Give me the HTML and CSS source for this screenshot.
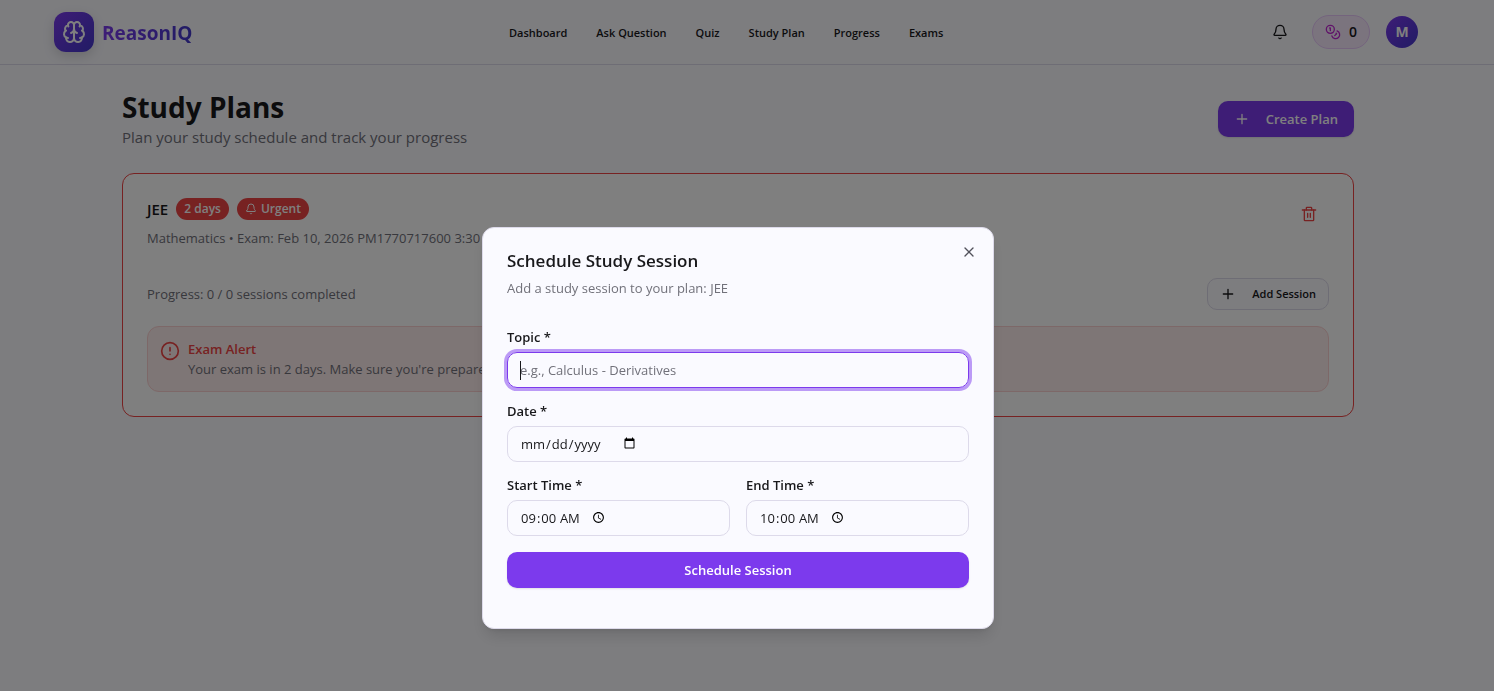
FILE: index.html
```html
<!DOCTYPE html>
<html lang="en">
<head>
<meta charset="utf-8">
<title>Study Plans - ReasonIQ</title>
<link rel="stylesheet" href="styles.css">
</head>
<body>
<header class="site-header">
  <div class="header-inner">
    <a class="brand" href="#">
      <span class="brand-mark">
        <svg class="icon icon-lg" viewBox="0 0 24 24"><path d="M12 5a3 3 0 1 0-5.997.125 4 4 0 0 0-2.526 5.77 4 4 0 0 0 .556 6.588A4 4 0 1 0 12 18Z"/><path d="M12 5a3 3 0 1 1 5.997.125 4 4 0 0 1 2.526 5.77 4 4 0 0 1-.556 6.588A4 4 0 1 1 12 18Z"/><path d="M15 13a4.5 4.5 0 0 1-3-4 4.5 4.5 0 0 1-3 4"/><path d="M17.599 6.5a3 3 0 0 0 .399-1.375"/><path d="M6.003 5.125A3 3 0 0 0 6.401 6.5"/><path d="M3.477 10.896a4 4 0 0 1 .585-.396"/><path d="M19.938 10.5a4 4 0 0 1 .585.396"/><path d="M6 18a4 4 0 0 1-1.967-.516"/><path d="M19.967 17.484A4 4 0 0 1 18 18"/></svg>
      </span>
      <span class="brand-name">ReasonIQ</span>
    </a>
    <nav class="main-nav">
      <a href="#">Dashboard</a>
      <a href="#">Ask Question</a>
      <a href="#">Quiz</a>
      <a href="#">Study Plan</a>
      <a href="#">Progress</a>
      <a href="#">Exams</a>
    </nav>
    <div class="header-actions">
      <button class="icon-button" type="button" aria-label="Notifications">
        <svg class="icon" viewBox="0 0 24 24"><path d="M10.268 21a2 2 0 0 0 3.464 0"/><path d="M3.262 15.326A1 1 0 0 0 4 17h16a1 1 0 0 0 .74-1.673C19.41 13.956 18 12.499 18 8A6 6 0 0 0 6 8c0 4.499-1.411 5.956-2.738 7.326"/></svg>
      </button>
      <a class="credits" href="#">
        <svg class="icon" viewBox="0 0 24 24"><circle cx="8" cy="8" r="6"/><path d="M18.09 10.37A6 6 0 1 1 10.34 18"/><path d="M7 6h1v4"/><path d="m16.71 13.88.7.71-2.82 2.82"/></svg>
        <span>0</span>
      </a>
      <button class="icon-button" type="button" aria-label="Account"><span class="avatar">M</span></button>
    </div>
  </div>
</header>

<main class="page">
  <div class="page-head">
    <div>
      <h1>Study Plans</h1>
      <p class="lead">Plan your study schedule and track your progress</p>
    </div>
    <button class="button primary" type="button">
      <svg class="icon" viewBox="0 0 24 24"><path d="M5 12h14M12 5v14"/></svg>
      Create Plan
    </button>
  </div>

  <section class="plan">
    <div class="plan-head">
      <div>
        <div class="plan-title">
          <h2>JEE</h2>
          <span class="badge">2 days</span>
          <span class="badge"><svg class="icon icon-sm" viewBox="0 0 24 24"><path d="M10.268 21a2 2 0 0 0 3.464 0"/><path d="M3.262 15.326A1 1 0 0 0 4 17h16a1 1 0 0 0 .74-1.673C19.41 13.956 18 12.499 18 8A6 6 0 0 0 6 8c0 4.499-1.411 5.956-2.738 7.326"/></svg>Urgent</span>
        </div>
        <p class="muted">Mathematics • Exam: Feb 10, 2026 PM1770717600 3:30 PM</p>
      </div>
      <button class="icon-button danger" type="button" aria-label="Delete plan">
        <svg class="icon" viewBox="0 0 24 24"><path d="M2 6h20"/><path d="M19 6v15a1 1 0 0 1-1 1H6a1 1 0 0 1-1-1V6"/><path d="M8 6V3a1 1 0 0 1 1-1h6a1 1 0 0 1 1 1v3"/><path d="M10 11v6M14 11v6"/></svg>
      </button>
    </div>
    <div class="plan-progress">
      <p class="muted">Progress: 0 / 0 sessions completed</p>
      <button class="button outline" type="button">
        <svg class="icon" viewBox="0 0 24 24"><path d="M5 12h14M12 5v14"/></svg>
        Add Session
      </button>
    </div>
    <div class="alert">
      <svg class="icon icon-md" viewBox="0 0 24 24"><circle cx="12" cy="12" r="10"/><path d="M12 8v4M12 16h.01"/></svg>
      <div>
        <p class="alert-title">Exam Alert</p>
        <p class="muted">Your exam is in 2 days. Make sure you're prepared!</p>
      </div>
    </div>
  </section>
</main>

<div class="overlay">
  <div class="dialog" role="dialog" aria-modal="true" aria-labelledby="dialog-title">
    <button class="close" type="button" aria-label="Close">
      <svg class="icon" viewBox="0 0 24 24"><path d="M18 6 6 18M6 6l12 12"/></svg>
    </button>
    <div class="dialog-head">
      <h2 id="dialog-title">Schedule Study Session</h2>
      <p class="muted">Add a study session to your plan: JEE</p>
    </div>
    <form class="form">
      <div class="field">
        <label for="topic">Topic *</label>
        <div class="text-box">
          <input id="topic" type="text" placeholder="e.g., Calculus - Derivatives" autofocus>
        </div>
      </div>
      <div class="field">
        <label for="date">Date *</label>
        <input id="date" type="date">
      </div>
      <div class="field-row">
        <div class="field">
          <label for="start">Start Time *</label>
          <input id="start" type="time" value="09:00">
        </div>
        <div class="field">
          <label for="end">End Time *</label>
          <input id="end" type="time" value="10:00">
        </div>
      </div>
      <button class="button primary" type="submit">Schedule Session</button>
    </form>
  </div>
</div>
</body>
</html>
```

FILE: styles.css
```css
:root {
  --primary: #7c3aed;
  --indigo: #4338ca;
  --ink: #18181b;
  --muted: #71717a;
  --line: #dddaea;
  --surface: #fafaff;
  --danger: #ef4444;
  --gutter: 18px;
}

* { box-sizing: border-box; }

body {
  margin: 0;
  background: var(--surface);
  color: var(--ink);
  font: 14px/20px "Segoe UI", "Open Sans", "Noto Sans", sans-serif;
}

h1, h2, p { margin: 0; }
a { color: inherit; text-decoration: none; }
button, input { font: inherit; color: inherit; }

.icon {
  width: 16px;
  height: 16px;
  flex: none;
  fill: none;
  stroke: currentColor;
  stroke-width: 2;
  stroke-linecap: round;
  stroke-linejoin: round;
}
.icon-sm { width: 12px; height: 12px; }
.icon-md { width: 20px; height: 20px; }
.icon-lg { width: 24px; height: 24px; }

.site-header {
  padding-right: var(--gutter);
  border-bottom: 1px solid var(--line);
}
.header-inner {
  display: flex;
  align-items: center;
  justify-content: space-between;
  max-width: 1400px;
  height: 64px;
  margin: 0 auto;
  padding: 0 16px;
}
.brand { display: flex; align-items: center; gap: 8px; }
.brand-mark {
  display: grid;
  place-items: center;
  width: 40px;
  height: 40px;
  border-radius: 12px;
  background: linear-gradient(135deg, var(--primary), var(--indigo));
  color: #fff;
  box-shadow: 0 4px 12px rgb(0 0 0 / 15%);
}
.brand-name {
  padding-top: 2px;
  font-size: 19px;
  line-height: 28px;
  font-weight: 700;
  background: linear-gradient(90deg, var(--primary), var(--indigo));
  background-clip: text;
  color: transparent;
}
.main-nav { display: flex; gap: 29px; padding-top: 2px; font-size: 11px; font-weight: 600; }
.header-actions { display: flex; align-items: center; gap: 12px; }

.icon-button {
  display: grid;
  place-items: center;
  width: 40px;
  height: 32px;
  padding: 0;
  border: 0;
  background: none;
}
.danger { color: var(--danger); }
.credits {
  display: flex;
  align-items: center;
  gap: 8px;
  height: 34px;
  padding: 0 12px;
  border: 1px solid #e9c8fb;
  border-radius: 17px;
  background: #f7e9fd;
  font-weight: 600;
}
.credits .icon { color: #c026d3; }
.avatar {
  display: grid;
  place-items: center;
  width: 32px;
  height: 32px;
  border-radius: 50%;
  background: linear-gradient(135deg, var(--primary), var(--indigo));
  color: #fff;
  font-weight: 700;
}

.page {
  max-width: calc(1280px + var(--gutter));
  margin: 0 auto;
  padding: 24px calc(24px + var(--gutter)) 24px 24px;
}
.page-head {
  display: flex;
  align-items: center;
  justify-content: space-between;
  margin-bottom: 24px;
}
h1 { font-size: 28px; line-height: 36px; font-weight: 700; }
.lead { font-size: 15px; line-height: 24px; color: var(--muted); }
.muted { color: var(--muted); font-size: 13px; }

.button {
  display: flex;
  align-items: center;
  justify-content: center;
  gap: 16px;
  height: 36px;
  padding: 0 16px;
  border: 0;
  border-radius: 10px;
  font-size: 13px;
  font-weight: 600;
}
.primary {
  background: var(--primary);
  color: #fff;
  box-shadow: 0 1px 2px rgb(0 0 0 / 10%);
}
.outline {
  height: 32px;
  padding: 0 12px;
  border: 1px solid var(--line);
  background: var(--surface);
  font-size: 11px;
}

.plan {
  padding: 24px;
  border: 1px solid var(--danger);
  border-radius: 12px;
  background: #fff;
}
.plan-head, .plan-progress { display: flex; justify-content: space-between; }
.plan-head { margin-bottom: 30px; }
.plan-progress { align-items: center; margin-bottom: 16px; }
.plan-title { display: flex; align-items: center; gap: 8px; height: 22px; margin-bottom: 8px; }
.plan-title h2 { font-size: 15px; font-weight: 600; }
.badge {
  display: flex;
  align-items: center;
  gap: 4px;
  height: 22px;
  padding: 0 8px;
  border-radius: 11px;
  background: var(--danger);
  color: #fff;
  font-size: 12px;
  font-weight: 600;
}

.alert {
  display: flex;
  gap: 8px;
  padding: 12px;
  border: 1px solid #fbd0d0;
  border-radius: 12px;
  background: #fdecec;
}
.alert .icon { margin-top: 2px; color: var(--danger); }
.alert-title { color: var(--danger); font-size: 13px; font-weight: 600; }

.overlay {
  position: fixed;
  inset: 0;
  display: flex;
  align-items: center;
  justify-content: center;
  padding-right: var(--gutter);
  padding-top: 164px;
  background: rgb(0 0 0 / 50%);
}
.dialog {
  position: relative;
  width: 100%;
  max-width: 512px;
  padding: 24px;
  border: 1px solid var(--line);
  border-radius: 12px;
  background: var(--surface);
  box-shadow: 0 10px 15px -3px rgb(0 0 0 / 12%), 0 4px 6px -4px rgb(0 0 0 / 12%);
}
.close {
  position: absolute;
  top: 16px;
  right: 16px;
  display: grid;
  padding: 0;
  border: 0;
  background: none;
  color: #52525b;
}
.dialog-head { display: grid; gap: 8px; margin-bottom: 16px; }
.dialog-head h2 { font-size: 17px; line-height: 18px; font-weight: 600; }

.form { display: grid; gap: 16px; padding: 16px 0; }
.field-row { display: grid; grid-template-columns: 1fr 1fr; gap: 16px; }
.field { display: grid; gap: 8px; }
.field label { font-size: 13px; line-height: 14px; font-weight: 600; }
.field input {
  display: flex;
  width: 100%;
  height: 36px;
  padding: 4px 12px;
  border: 1px solid var(--line);
  border-radius: 10px;
  background: transparent;
  font-size: 13px;
}
.field input::placeholder { color: var(--muted); }
.field input:focus {
  outline: none;
  border-color: var(--primary);
  box-shadow: 0 0 0 3px rgb(124 58 237 / 50%);
}

/* Tall caret shown while the text box is focused and empty */
.text-box { position: relative; }
.text-box input:placeholder-shown { caret-color: transparent; }
.text-box:has(input:focus:placeholder-shown)::after {
  content: "";
  position: absolute;
  top: 9px;
  left: 13px;
  width: 1px;
  height: 19px;
  background: var(--ink);
}
```
